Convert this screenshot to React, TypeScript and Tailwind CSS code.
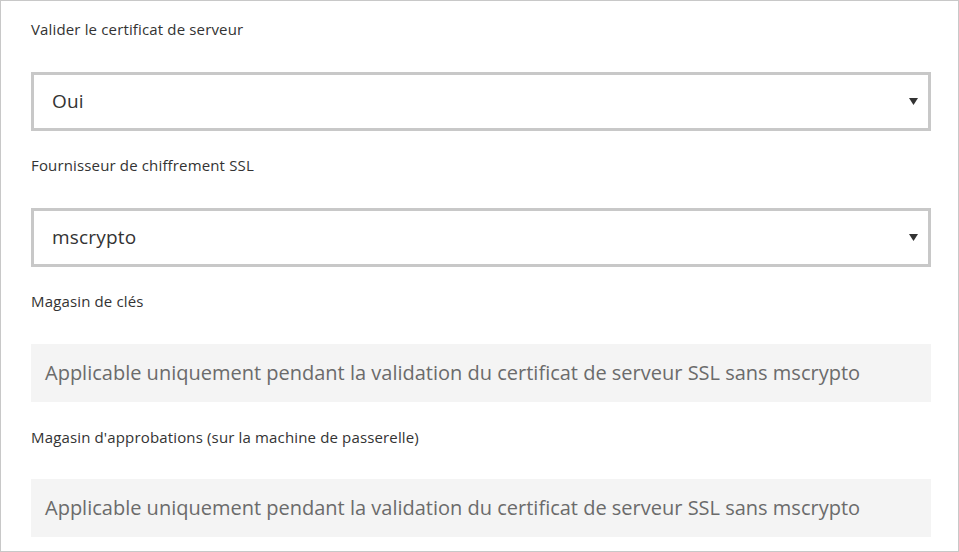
import React from "react";

function Arrow() {
  return (
    <svg width="9" height="7" viewBox="0 0 9 7" className="shrink-0">
      <polygon points="0,0 9,0 4.5,7" fill="#333333" />
    </svg>
  );
}

function Select({ value }: { value: string }) {
  return (
    <div className="flex h-[59px] w-[900px] items-center justify-between border-[3px] border-[#c8c8c8] bg-white pl-[18px] pr-[10px]">
      <span className="text-[19px] tracking-[0.2px] text-[#333333]">{value}</span>
      <Arrow />
    </div>
  );
}

function Disabled({ text }: { text: string }) {
  return (
    <div className="flex h-[58px] w-[900px] items-center bg-[#f4f4f4] pl-[14px]">
      <span className="text-[20px] text-[#6b6b6b]">{text}</span>
    </div>
  );
}

function Label({ children }: { children: React.ReactNode }) {
  return <div className="h-[20px] text-[15px] leading-[20px] tracking-[0.15px] text-[#333333]">{children}</div>;
}

export default function App() {
  const msg = "Applicable uniquement pendant la validation du certificat de serveur SSL sans mscrypto";
  return (
    <div
      className="h-[552px] w-[959px] border border-[#c8c8c8] bg-white pl-[30px] pt-[18px]"
      style={{ fontFamily: '"Open Sans", "Noto Sans", sans-serif' }}
    >
      <div className="flex flex-col">
        <Label>Valider le certificat de serveur</Label>
        <div className="mt-[33px]">
          <Select value="Oui" />
        </div>
        <div className="mt-[24px]">
          <Label>Fournisseur de chiffrement SSL</Label>
        </div>
        <div className="mt-[33px]">
          <Select value="mscrypto" />
        </div>
        <div className="mt-[24px]">
          <Label>Magasin de clés</Label>
        </div>
        <div className="mt-[33px]">
          <Disabled text={msg} />
        </div>
        <div className="mt-[25px]">
          <Label>Magasin d'approbations (sur la machine de passerelle)</Label>
        </div>
        <div className="mt-[32px]">
          <Disabled text={msg} />
        </div>
      </div>
    </div>
  );
}
